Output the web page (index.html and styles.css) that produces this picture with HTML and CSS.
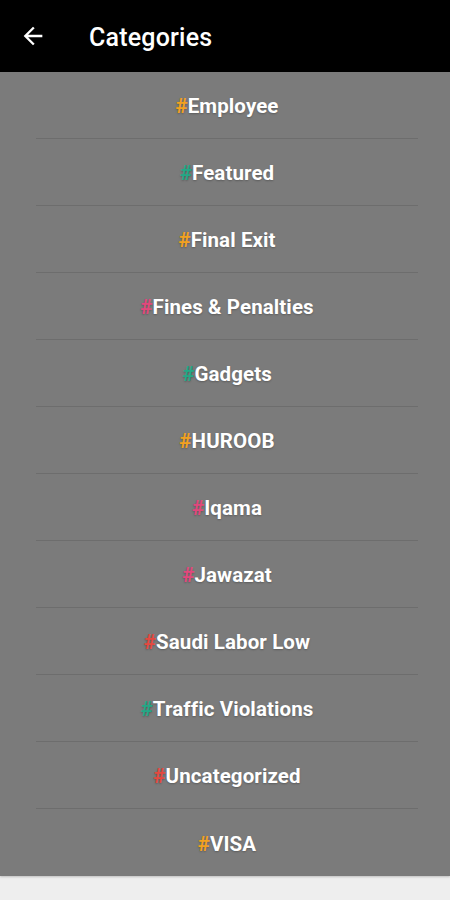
FILE: index.html
```html
<!DOCTYPE html>
<html lang="en">

<head>
    <meta charset="UTF-8">
    <meta name="viewport" content="width=device-width, initial-scale=1.0">
    <title>Categories</title>
    <link rel="stylesheet" href="styles.css">
</head>

<body>
    <header class="topbar">
        <button class="back" aria-label="Back">
            <svg width="24" height="24" viewBox="0 0 24 24">
                <path d="M20 11H7.83l5.59-5.59L12 4l-8 8 8 8 1.41-1.41L7.83 13H20v-2z" fill="#fff" />
            </svg>
        </button>
        <h1>Categories</h1>
    </header>

    <ul class="list">
        <li><span class="tag orange">#</span>Employee</li>
        <li><span class="tag green">#</span>Featured</li>
        <li><span class="tag orange">#</span>Final Exit</li>
        <li><span class="tag pink">#</span>Fines &amp; Penalties</li>
        <li><span class="tag green">#</span>Gadgets</li>
        <li><span class="tag orange">#</span>HUROOB</li>
        <li><span class="tag pink">#</span>Iqama</li>
        <li><span class="tag pink">#</span>Jawazat</li>
        <li><span class="tag red">#</span>Saudi Labor Low</li>
        <li><span class="tag green">#</span>Traffic Violations</li>
        <li><span class="tag red">#</span>Uncategorized</li>
        <li><span class="tag orange">#</span>VISA</li>
    </ul>
</body>

</html>
```
FILE: styles.css
```css
body,
html {
    margin: 0;
}

body {
    background-color: #eeeeee;
    font-family: 'Roboto', sans-serif;
    height: 900px;
}

.topbar {
    height: 72px;
    background-color: #000;
    display: flex;
    align-items: center;
}

.back {
    background: none;
    border: 0;
    padding: 0;
    margin-left: 19px;
    width: 28px;
    height: 28px;
    display: flex;
    align-items: center;
    justify-content: center;
}

.back svg {
    width: 28px;
    height: 28px;
}

.topbar h1 {
    margin: 2px 0 0 42px;
    color: #fff;
    font-size: 25px;
    font-weight: 500;
    letter-spacing: 0.2px;
}

.list {
    list-style: none;
    margin: 0;
    padding: 0 32px 0 36px;
    background-color: #7b7b7b;
    box-shadow: 0 1px 2px rgba(0, 0, 0, 0.2);
}

.list li {
    box-sizing: border-box;
    height: 67px;
    padding-top: 2px;
    display: flex;
    align-items: center;
    justify-content: center;
    color: #fff;
    font-size: 20.5px;
    font-weight: 700;
    letter-spacing: 0.1px;
    text-shadow: 0 1px 2px rgba(0, 0, 0, 0.25);
    border-bottom: 1px solid #6d6d6d;
}

.list li:last-child {
    border-bottom: 0;
}

.tag {
    font-weight: 700;
}

.orange {
    color: #f2a11f;
}

.green {
    color: #23a886;
}

.pink {
    color: #e2477c;
}

.red {
    color: #e5483f;
}
```
